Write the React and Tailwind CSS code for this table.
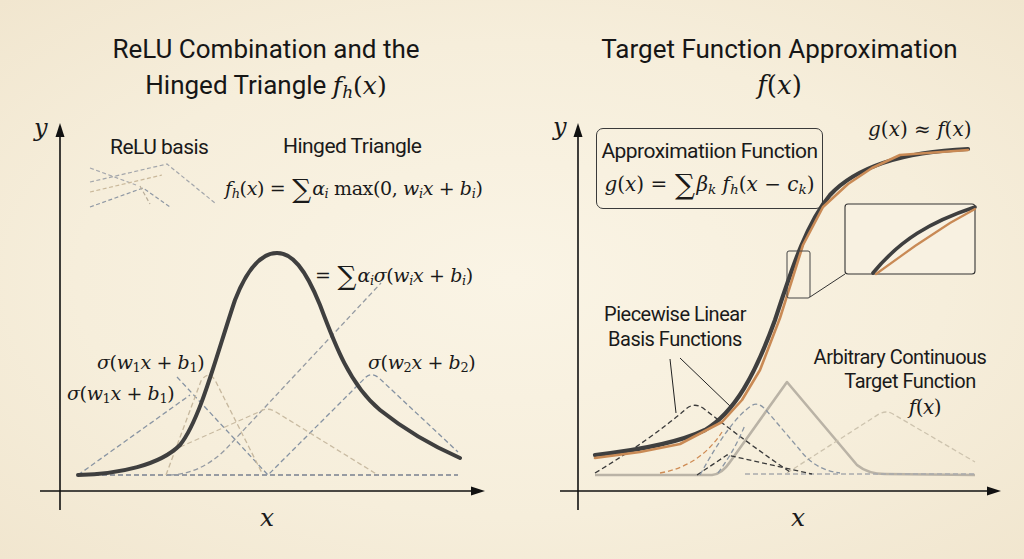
import React from "react";

const V = ({ children }) => <i className="italic">{children}</i>;
const S = ({ children }) => (
  <sub className="text-[0.68em] not-italic">{children}</sub>
);
const Si = ({ children }) => (
  <sub className="text-[0.68em] italic">{children}</sub>
);
const Sum = () => (
  <span className="inline-block text-[1.4em] leading-none relative top-[0.12em] mx-[0.05em]">∑</span>
);

const M = ({ className = "", children }) => (
  <span className={"font-['DejaVu_Serif','Liberation_Serif',serif] text-[#1a1a1a] whitespace-nowrap " + className}>
    {children}
  </span>
);

function LeftChart() {
  return (
    <div className="relative w-[512px] h-[449px]">
      <svg className="absolute inset-0" width="512" height="449" viewBox="0 110 512 449">
        {/* axes */}
        <line x1="60" y1="510" x2="60" y2="134" stroke="#111" strokeWidth="1.6" />
        <polygon points="60,123 55.5,137 64.5,137" fill="#111" />
        <line x1="40" y1="491" x2="474" y2="491" stroke="#111" strokeWidth="1.6" />
        <polygon points="485,491 471,486.5 471,495.5" fill="#111" />

        {/* relu basis mini lines */}
        <g fill="none" strokeWidth="1.2" strokeDasharray="4 2.5">
          <path d="M90,168 L136,185" stroke="#a7a9ae" />
          <path d="M90,182 L167,164 L215,203" stroke="#a3a6ab" />
          <path d="M90,192 L162,175" stroke="#c9b89a" />
          <path d="M90,207 L143,188 L170,207" stroke="#8f98a4" />
          <path d="M140,186 L150,204" stroke="#b9ad98" />
        </g>

        {/* dashed components */}
        <g fill="none" strokeWidth="1.3" strokeDasharray="5 3">
          <path d="M78,475 L458,475" stroke="#979ba2" strokeWidth="2" />
          <path d="M78,475 L190,395" stroke="#8a95a3" />
          <path d="M177,377 L268,475 L366,377 Q372,372 379,378 L458,452" stroke="#8592a2" />
          <path d="M170,475 Q200,474 225,450 L381,283" stroke="#949aa2" />
          <path d="M166,475 L201,381 Q208,370 215,380 L262,473" stroke="#c7b89e" />
          <path d="M180,447 L261,411 Q268,407 276,412 L378,475" stroke="#c9bba2" />
        </g>

        {/* bell curve */}
        <path
          d="M78,475 C120,474 160,465 180,445 C200,420 215,360 235,300 C250,262 265,253 277,253 C292,253 305,268 320,305 C335,345 350,385 380,410 C405,430 435,447 460,458"
          fill="none"
          stroke="#3f3f3f"
          strokeWidth="4"
          strokeLinecap="round"
        />
      </svg>

      <M className="absolute left-[34px] top-[6px] text-[24px] italic leading-none">y</M>
      <M className="absolute left-[260px] top-[395px] text-[25px] italic leading-none">x</M>

      <div className="absolute left-[110px] top-[27px] text-[21px] leading-none tracking-tight text-[#1a1a1a] font-['Roboto',sans-serif]">
        ReLU basis
      </div>
      <div className="absolute left-[283px] top-[26px] text-[21px] leading-none tracking-tight text-[#1a1a1a] font-['Roboto',sans-serif]">
        Hinged Triangle
      </div>
      <M className="absolute left-[225px] top-[63px] text-[19px] tracking-[-0.02em] leading-none">
        <V>f</V><Si>h</Si>(<V>x</V>) = <Sum /><V>α</V><Si>i</Si> max(0, <V>w</V><Si>i</Si><V>x</V> + <V>b</V><Si>i</Si>)
      </M>
      <M className="absolute left-[315px] top-[150px] text-[19px] tracking-[-0.02em] leading-none">
        = <Sum /><V>α</V><Si>i</Si><V>σ</V>(<V>w</V><Si>i</Si><V>x</V> + <V>b</V><Si>i</Si>)
      </M>
      <M className="absolute left-[97px] top-[243px] text-[19px] tracking-[-0.02em] leading-none">
        <V>σ</V>(<V>w</V><S>1</S><V>x</V> + <V>b</V><S>1</S>)
      </M>
      <M className="absolute left-[67px] top-[274px] text-[19px] tracking-[-0.02em] leading-none">
        <V>σ</V>(<V>w</V><S>1</S><V>x</V> + <V>b</V><S>1</S>)
      </M>
      <M className="absolute left-[368px] top-[243px] text-[19px] tracking-[-0.02em] leading-none">
        <V>σ</V>(<V>w</V><S>2</S><V>x</V> + <V>b</V><S>2</S>)
      </M>
    </div>
  );
}

function RightChart() {
  return (
    <div className="relative w-[512px] h-[449px]">
      <svg className="absolute inset-0" width="512" height="449" viewBox="512 110 512 449">
        {/* axes */}
        <line x1="578" y1="510" x2="578" y2="134" stroke="#111" strokeWidth="1.6" />
        <polygon points="578,123 573.5,137 582.5,137" fill="#111" />
        <line x1="560" y1="491" x2="990" y2="491" stroke="#111" strokeWidth="1.6" />
        <polygon points="1001,491 987,486.5 987,495.5" fill="#111" />

        {/* solid target triangle */}
        <path
          d="M595,475 L712,475 Q722,474 730,462 L787,382 L857,465 Q868,474 885,474 L975,475"
          fill="none"
          stroke="#bab3a6"
          strokeWidth="2.6"
          strokeLinejoin="round"
        />

        {/* dashed basis functions */}
        <g fill="none" strokeWidth="1.3" strokeDasharray="5 3">
          <path d="M745,474 L975,474" stroke="#a9abad" strokeWidth="1.6" />
          <path d="M787,473 L879,414 Q886,410 893,414 L975,462" stroke="#cdc3ae" />
          <path d="M595,473 Q650,440 686,409 Q694,402 703,408 Q750,445 790,472" stroke="#3a3a3a" />
          <path d="M697,475 L727,455 L812,474" stroke="#3a3a3a" />
          <path d="M660,473 Q700,466 722,432" stroke="#cf8c55" />
          <path d="M700,475 Q730,420 751,406 Q758,401 766,410 L800,450 Q815,470 840,473" stroke="#8b96a3" />
          <path d="M718,473 Q735,450 745,425" stroke="#8b96a3" />
        </g>

        {/* pointer lines */}
        <path d="M670,359 L676,413" stroke="#222" strokeWidth="1" />
        <path d="M680,358 L731,407" stroke="#222" strokeWidth="1" />

        {/* sigmoid */}
        <path
          d="M595,455 C640,450 680,442 705,430 C735,412 755,375 775,320 C790,275 805,225 830,195 C855,168 900,152 968,149"
          fill="none"
          stroke="#3f3f3f"
          strokeWidth="4.2"
          strokeLinecap="round"
        />
        <path
          d="M595,458 L640,452 L680,444 L722,422 L742,400 L760,370 L780,318 L792,280 L803,245 L823,207 L848,184 L872,168 L900,155 L968,150"
          fill="none"
          stroke="#c98a55"
          strokeWidth="2.6"
          strokeLinejoin="round"
          strokeLinecap="round"
        />

        {/* zoom boxes */}
        <rect x="787" y="251" width="23" height="47" rx="2" fill="none" stroke="#444" strokeWidth="1" />
        <line x1="810" y1="297" x2="845" y2="274" stroke="#333" strokeWidth="1" />
        <rect x="845" y="204" width="130" height="70" rx="3" fill="#f8f1e1" stroke="#333" strokeWidth="1.1" />
        <path d="M873,273 C900,240 930,222 975,207" fill="none" stroke="#3f3f3f" strokeWidth="3.6" strokeLinecap="round" />
        <path d="M876,274 L915,246 L950,223 L975,209" fill="none" stroke="#c98a55" strokeWidth="2.2" strokeLinecap="round" />
      </svg>

      <M className="absolute left-[41px] top-[5px] text-[24px] italic leading-none">y</M>
      <M className="absolute left-[279px] top-[395px] text-[25px] italic leading-none">x</M>

      <div className="absolute left-[84px] top-[18px] w-[227px] h-[81px] border border-[#3a3a3a] rounded-[7px] flex flex-col items-center justify-center gap-[6px]">
        <div className="text-[21px] leading-none tracking-tight text-[#1a1a1a] font-['Roboto',sans-serif]">
          Approximatiion Function
        </div>
        <M className="text-[20px] leading-none">
          <V>g</V>(<V>x</V>) = <Sum /><V>β</V><Si>k</Si> <V>f</V><Si>h</Si>(<V>x</V> − <V>c</V><Si>k</Si>)
        </M>
      </div>

      <M className="absolute left-[356px] top-[9px] text-[20px] leading-none">
        <V>g</V>(<V>x</V>) ≈ <V>f</V>(<V>x</V>)
      </M>

      <div className="absolute left-[86px] top-[192px] w-[154px] flex flex-col items-center text-[20px] leading-[25px] tracking-tight text-[#1a1a1a] font-['Roboto',sans-serif]">
        <span>Piecewise Linear</span>
        <span>Basis Functions</span>
      </div>

      <div className="absolute left-[296px] top-[235px] w-[184px] flex flex-col items-center text-[20px] leading-[24px] tracking-tight text-[#1a1a1a] font-['Roboto',sans-serif]">
        <span>Arbitrary Continuous</span>
        <span className="ml-[20px]">Target Function</span>
        <M className="ml-[50px] text-[20px] leading-[28px]">
          <V>f</V>(<V>x</V>)
        </M>
      </div>
    </div>
  );
}

export default function App() {
  return (
    <div className="w-[1024px] h-[559px] overflow-hidden flex bg-[radial-gradient(ellipse_at_center,#faf4e5_0%,#f6eedb_60%,#f1e6cf_100%)]">
      <div className="w-[512px] flex flex-col">
        <div className="h-[110px] pt-[31px] pl-[20px] flex flex-col items-center text-[26px] leading-[36px] text-[#161616] font-['Roboto',sans-serif]">
          <span>ReLU Combination and the</span>
          <span>
            Hinged Triangle{" "}
            <M className="text-[25px] text-[#161616]">
              <V>f</V><Si>h</Si>(<V>x</V>)
            </M>
          </span>
        </div>
        <LeftChart />
      </div>
      <div className="w-[512px] flex flex-col">
        <div className="h-[110px] pt-[31px] pl-[23px] flex flex-col items-center text-[26px] leading-[36px] text-[#161616] font-['Roboto',sans-serif]">
          <span>Target Function Approximation</span>
          <M className="text-[26px] text-[#161616]">
            <V>f</V>(<V>x</V>)
          </M>
        </div>
        <RightChart />
      </div>
    </div>
  );
}
